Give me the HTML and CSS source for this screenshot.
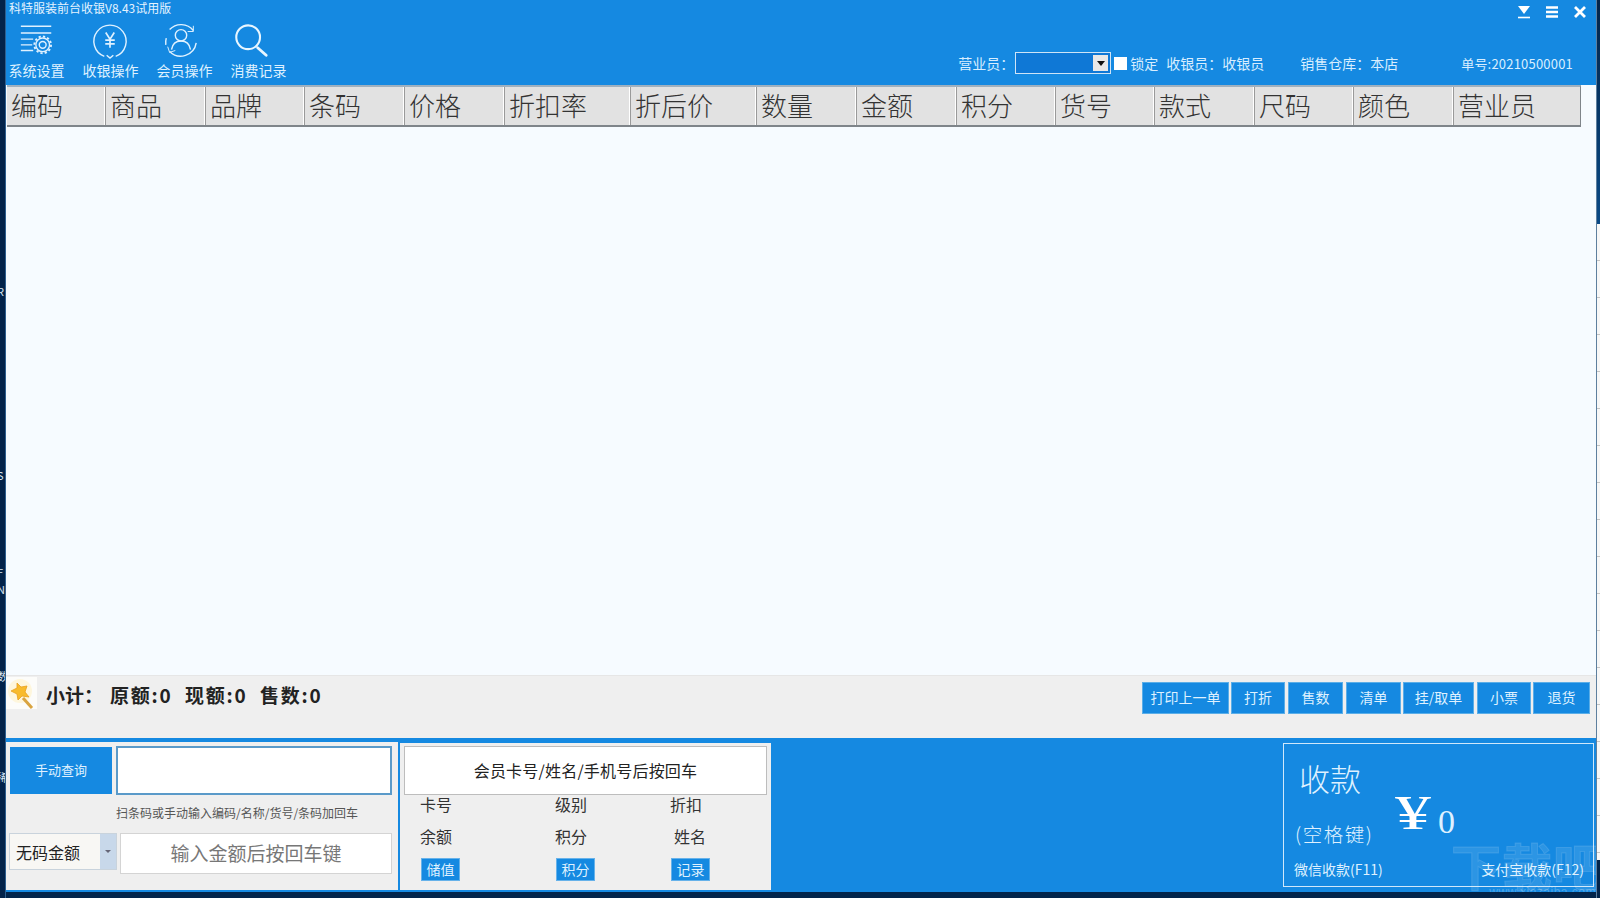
FILE: index.html
```html
<!DOCTYPE html>
<html lang="zh-CN">
<head>
<meta charset="utf-8">
<title>科特服装前台收银</title>
<link rel="stylesheet" href="styles.css">
</head>
<body>
<div class="desktop">
  <div class="strip-left">
    <span class="frag f1">R</span><span class="frag f2">S</span><span class="frag f3">F</span><span class="frag f4">N</span><span class="frag f5">数</span><span class="frag f6">稀</span>
  </div>
  <main class="window">
    <header class="header">
      <div class="titlebar">
        <span class="title">科特服装前台收银V8.43试用版</span>
        <div class="winctl">
          <svg class="ctl" viewBox="0 0 14 14"><path d="M1 1h12L7 9z" fill="#fff"/><path d="M1 12.5h12" stroke="#fff" stroke-width="1.6"/></svg>
          <svg class="ctl" viewBox="0 0 14 14"><path d="M1 2.5h12M1 7h12M1 11.5h12" stroke="#fff" stroke-width="2.4"/></svg>
          <svg class="ctl" viewBox="0 0 14 14"><path d="M2 2l10 10M12 2L2 12" stroke="#fff" stroke-width="2.8"/></svg>
        </div>
      </div>
      <div class="toolbar">
        <div class="tools">
          <div class="tool">
            <svg class="ico" viewBox="0 0 40 40" fill="none" stroke="#dff1ff" stroke-width="1.5">
              <path d="M3 3.5h32M3 10.5h32M3 17h13M3 23h12M3 29h13"/>
              <circle cx="26" cy="23" r="3.6"/>
              <circle cx="26" cy="23" r="7.2" stroke-width="1.4"/>
              <circle cx="26" cy="23" r="8.8" stroke-width="2" stroke-dasharray="2.4 2.2"/>
            </svg>
            <span class="tool-label">系统设置</span>
          </div>
          <div class="tool">
            <svg class="ico ico-cash" viewBox="0 0 40 40" fill="none" stroke="#dff1ff" stroke-width="1.5">
              <path d="M14 36.2A17 17 0 1 1 26 36.2"/>
              <path d="M16.5 35l3.5 3 3.5-3"/>
              <path d="M15.5 11l4.5 7 4.5-7M20 18v9M15 19h10M15 23h10" stroke-width="1.8"/>
            </svg>
            <span class="tool-label">收银操作</span>
          </div>
          <div class="tool">
            <svg class="ico ico-member" viewBox="0 0 40 40" fill="none" stroke="#dff1ff" stroke-width="1.5">
              <path d="M8 8A16.5 16.5 0 0 1 33 9M36 22A16.5 16.5 0 0 1 8 31M4 24A16.5 16.5 0 0 1 4.5 17"/>
              <path d="M33 4v6h-6M6 26l2 6 6-2" stroke-width="1"/>
              <circle cx="20" cy="14" r="6"/>
              <path d="M10 29c1-6 5-9 10-9s9 3 10 9"/>
            </svg>
            <span class="tool-label">会员操作</span>
          </div>
          <div class="tool">
            <svg class="ico ico-search" viewBox="0 0 40 40" fill="none" stroke="#e8f6ff" stroke-width="2.2">
              <circle cx="17" cy="15" r="12.5"/>
              <path d="M27 26l9 8" stroke-width="3" stroke-linecap="round"/>
            </svg>
            <span class="tool-label">消费记录</span>
          </div>
        </div>
        <div class="status">
          <span class="lbl-staff">营业员：</span>
          <div class="combo"><span class="combo-arrow"><i class="tri"></i></span></div>
          <span class="check"></span>
          <span class="lock">锁定</span>
          <span class="cashier">收银员：收银员</span>
          <span class="store">销售仓库：本店</span>
          <span class="order">单号:20210500001</span>
        </div>
      </div>
    </header>

    <section class="table-area">
      <div class="thead">
        <div class="th">编码</div><div class="th">商品</div><div class="th">品牌</div><div class="th">条码</div><div class="th">价格</div><div class="th">折扣率</div><div class="th">折后价</div><div class="th">数量</div><div class="th">金额</div><div class="th">积分</div><div class="th">货号</div><div class="th">款式</div><div class="th">尺码</div><div class="th">颜色</div><div class="th">营业员</div>
      </div>
    </section>

    <section class="summary">
      <div class="left-sum">
        <div class="wand">
          <svg viewBox="0 0 30 32" width="30" height="32">
            <circle cx="14" cy="14" r="12" fill="#fff3cf" opacity=".7"/>
            <path d="M17 21l9 10" stroke="#d9a441" stroke-width="3"/>
            <path d="M11 6l4 4 6-1-2 6 4 5-7-1-4 4-1-6-6-3 6-3z" fill="#f8bb2c" stroke="#e8a01c" stroke-width=".8"/>
          </svg>
        </div>
        <span class="sum-title">小计：</span>
        <span class="sum-a">原额:0</span>
        <span class="sum-b">现额:0</span>
        <span class="sum-c">售数:0</span>
      </div>
      <div class="actions">
        <button class="act w87">打印上一单</button>
        <button class="act w54">打折</button>
        <button class="act w55">售数</button>
        <button class="act w55">清单</button>
        <button class="act w71">挂/取单</button>
        <button class="act w54 ml1">小票</button>
        <button class="act w57">退货</button>
      </div>
    </section>

    <section class="bottom">
      <div class="scan">
        <div class="scan-row">
          <button class="manual">手动查询</button>
          <div class="scan-input"></div>
        </div>
        <div class="hint">扫条码或手动输入编码/名称/货号/条码加回车</div>
        <div class="scan-row2">
          <div class="select"><span class="select-text">无码金额</span><span class="select-arrow"><i class="tri-s"></i></span></div>
          <div class="amount">输入金额后按回车键</div>
        </div>
      </div>
      <div class="member">
        <div class="member-input">会员卡号/姓名/手机号后按回车</div>
        <div class="m-grid">
          <span>卡号</span><span>级别</span><span>折扣</span>
          <span>余额</span><span>积分</span><span class="m-name">姓名</span>
        </div>
        <div class="m-btns">
          <button class="m-btn">储值</button><button class="m-btn">积分</button><button class="m-btn">记录</button>
        </div>
      </div>
      <div class="pay">
        <div class="pay-top">
          <div class="pay-left">
            <div class="pay-title">收款</div>
            <div class="pay-key">(空格键)</div>
          </div>
          <div class="pay-amt"><span class="yen">¥</span><span class="zero">0</span></div>
        </div>
        <div class="pay-foot"><span>微信收款(F11)</span><span>支付宝收款(F12)</span></div>
      </div>
    </section>
    <div class="wm">下载吧</div>
    <div class="wm-url">www.xiazaiba.com</div>
  </main>
  <div class="strip-right">
    <div class="sr-dark"></div>
    <div class="sr-light"></div>
    <div class="sr-bottom"></div>
  </div>
</div>
</body>
</html>
```
FILE: styles.css
```css
* { box-sizing: border-box; }
html, body { margin: 0; padding: 0; }
body {
  width: 1600px; height: 898px; overflow: hidden;
  background: #02244a;
  font-family: "Noto Sans CJK SC", "Noto Sans", sans-serif;
}
button { font-family: inherit; border: 0; padding: 0; }
.desktop { display: flex; width: 1600px; height: 898px; }

.strip-left { position: relative; width: 6px; background: #03234a; overflow: hidden; border-right: 1px solid #2e5f8f; }
.frag { position: absolute; left: -3px; color: #d9e6f2; font-size: 11px; line-height: 12px; }
.f1 { top: 285px; } .f2 { top: 469px; } .f3 { top: 566px; } .f4 { top: 583px; } .f5 { top: 670px; } .f6 { top: 771px; }

.window { position: relative; width: 1590px; height: 892px; display: flex; flex-direction: column; background: #f6fbff; overflow: hidden; }

.header { height: 85px; background: #1589e1; color: #d8eeff; flex: none; }
.titlebar { height: 20px; display: flex; justify-content: space-between; padding: 0 9px 0 3px; }
.title { font-size: 12px; line-height: 16px; color: #e4f3ff; }
.winctl { display: flex; gap: 14px; padding-top: 5px; }
.ctl { width: 14px; height: 14px; }

.toolbar { height: 65px; display: flex; justify-content: space-between; }
.tools { display: flex; padding-left: 3px; }
.tool { display: flex; flex-direction: column; align-items: center; width: 55px; margin-right: 19px; }
.ico { width: 38px; height: 38px; margin-top: 3px; flex: none; }
.ico-cash { margin-left: -2px; margin-top: 2px; margin-bottom: 1px; }
.ico-member { margin-left: -8px; margin-top: 2px; margin-bottom: 1px; }
.ico-search { margin-left: -15px; margin-top: 3px; }
.tool-label { font-size: 14px; line-height: 18px; white-space: nowrap; color: #dff1ff; }

.status { display: flex; align-items: center; font-size: 14px; height: 46px; margin-top: 20px; padding-right: 23px; color: #d8eeff; white-space: nowrap; }
.lbl-staff { width: 57px; }
.combo { width: 96px; height: 22px; background: #0f78d6; border: 1px solid #cfe4f6; display: flex; justify-content: flex-end; padding: 2px; }
.combo-arrow { width: 15px; background: #e8e8e8; display: flex; align-items: center; justify-content: center; }
.tri { width: 0; height: 0; border: 4px solid transparent; border-top: 5px solid #111; border-bottom: 0; }
.check { width: 13px; height: 13px; background: #fff; margin-left: 3px; }
.lock { margin-left: 3px; width: 28px; }
.cashier { margin-left: 8px; width: 98px; }
.store { margin-left: 36px; width: 100px; }
.order { margin-left: 61px; font-size: 13px; letter-spacing: .2px; }

.table-area { flex: 1; background: #f6fbff; padding-left: 1px; }
.thead {
  display: grid;
  grid-template-columns: 99px 100px 99px 100px 100px 126px 126px 100px 100px 99px 99px 100px 99px 100px 127px;
  height: 42px; width: 1574px;
  background: #e2e2e2; border-top: 2px solid #9fb0bf; border-bottom: 2px solid #7f858a; border-right: 1px solid #7f858a;
}
.th { font-size: 26px; font-weight: 300; line-height: 36px; color: #333; padding-left: 4px; border-right: 1px solid #9a9a9a; box-shadow: inset -1px 0 0 #fff; white-space: nowrap; }
.th:last-child { border-right: 0; box-shadow: none; }

.summary { height: 63px; flex: none; background: #efefef; display: flex; justify-content: space-between; border-top: 1px solid #e6e6e6; }
.left-sum { display: flex; align-items: flex-start; color: #222; font-weight: 700; font-size: 19px; line-height: 26px; white-space: nowrap; }
.wand { width: 31px; height: 32px; background: #fcfcfa; margin-top: 1px; }
.sum-title { margin: 6px 0 0 9px; width: 64px; }
.sum-a, .sum-b, .sum-c { margin-top: 6px; width: 75px; letter-spacing: 1.8px; }
.actions { display: flex; gap: 2px; padding: 6px 6px 0 0; align-items: flex-start; }
.act { height: 32px; background: #1589e1; color: #dff1ff; font-size: 14px; border: 1px solid #5aaee8; padding-bottom: 3px; }
.w87 { width: 87px; } .w54 { width: 54px; } .w55 { width: 55px; margin-left: 1px; } .w71 { width: 71px; } .w57 { width: 57px; }
.ml1 { margin-left: 1px; }

.bottom { height: 154px; flex: none; background: #1589e1; display: flex; padding-top: 4px; padding-bottom: 2px; }
.scan { width: 392px; height: 148px; background: #efefef; padding: 4px 6px 0 4px; }
.scan-row { display: flex; gap: 4px; height: 49px; }
.manual { width: 102px; height: 47px; margin-top: 1px; background: #1589e1; color: #dff1ff; font-size: 13px; padding-bottom: 2px; }
.scan-input { flex: 1; background: #fff; border: 2px solid #5a9ac9; }
.hint { font-size: 12px; line-height: 18px; color: #555; margin: 9px 0 0 106px; white-space: nowrap; height: 20px; }
.scan-row2 { display: flex; gap: 3px; margin-top: 9px; margin-left: -1px; }
.select { width: 108px; height: 37px; display: flex; background: #f8f7f4; border: 1px solid #c9d3dc; }
.select-text { flex: 1; font-size: 16px; line-height: 37px; color: #222; padding-left: 6px; }
.select-arrow { width: 16px; background: #c8d8ea; display: flex; align-items: center; justify-content: center; }
.tri-s { width: 0; height: 0; border: 3px solid transparent; border-top: 3px solid #667; border-bottom: 0; }
.amount { width: 272px; height: 41px; background: #fff; border: 1px solid #d4d4d4; font-size: 19px; line-height: 38px; text-align: center; color: #777; }

.member { width: 371px; height: 147px; margin-left: 2px; background: #efefef; padding: 3px 4px 0; margin-top: 1px; }
.member-input { height: 49px; background: #fff; border: 1px solid #bdbdbd; font-size: 16px; line-height: 46px; text-align: center; color: #222; letter-spacing: .2px; }
.m-grid { display: grid; grid-template-columns: 135px 115px auto; grid-auto-rows: 32px; padding: 0 0 0 16px; margin-top: -4px; font-size: 16px; line-height: 26px; color: #333; }
.m-name { padding-left: 4px; }
.m-btns { display: flex; padding-left: 17px; margin-top: 3px; }
.m-btn { width: 39px; height: 23px; flex: none; background: #1589e1; color: #dff1ff; font-size: 14px; border: 1px solid #66b2ea; line-height: 19px; white-space: nowrap; }
.m-btn:nth-child(1) { margin-right: 96px; }
.m-btn:nth-child(2) { margin-right: 76px; }

.pay { width: 311px; height: 144px; margin: 1px 0 0 512px; border: 1px solid #cfe8fb; color: #dff1ff; display: flex; flex-direction: column; }
.pay-top { display: flex; height: 116px; padding-left: 14px; }
.pay-left { width: 97px; flex: none; }
.pay-title { font-size: 31px; line-height: 40px; margin: 14px 0 0 1px; font-weight: 300; }
.pay-key { font-size: 19.5px; line-height: 26px; margin: 23px 0 0 -3px; white-space: nowrap; font-weight: 300; letter-spacing: 1.5px; }
.pay-amt { display: flex; align-items: flex-end; height: 94px; }
.yen { font-family: "Liberation Serif", serif; font-size: 48px; line-height: 50px; color: #fff; width: 36px; display: block; transform: scaleX(1.5); transform-origin: left bottom; }
.zero { font-family: "Liberation Serif", serif; font-size: 34px; line-height: 38px; margin-left: 7px; margin-bottom: -3px; }
.pay-foot { display: flex; justify-content: space-between; padding: 0 9px 0 10px; font-size: 14px; line-height: 18px; white-space: nowrap; }

.wm { position: absolute; right: -8px; bottom: 3px; font-size: 50px; line-height: 50px; font-weight: 700; letter-spacing: 1px; color: rgba(255,255,255,.1); -webkit-text-stroke: 1px rgba(255,255,255,.12); pointer-events: none; }
.wm-url { position: absolute; right: 0; bottom: -6px; font-size: 12px; line-height: 12px; color: rgba(255,255,255,.25); font-family: "Liberation Sans", sans-serif; letter-spacing: .5px; }

.strip-right { width: 4px; display: flex; flex-direction: column; border-left: 1px solid #5d7f9e; }
.sr-dark { height: 224px; background: linear-gradient(#02244a, #0a4a86); }
.sr-light { height: 636px; background: repeating-linear-gradient(#f7f7f7 0 36px, #c4c4c4 36px 37px); }
.sr-bottom { flex: 1; background: #02244a; }
```
